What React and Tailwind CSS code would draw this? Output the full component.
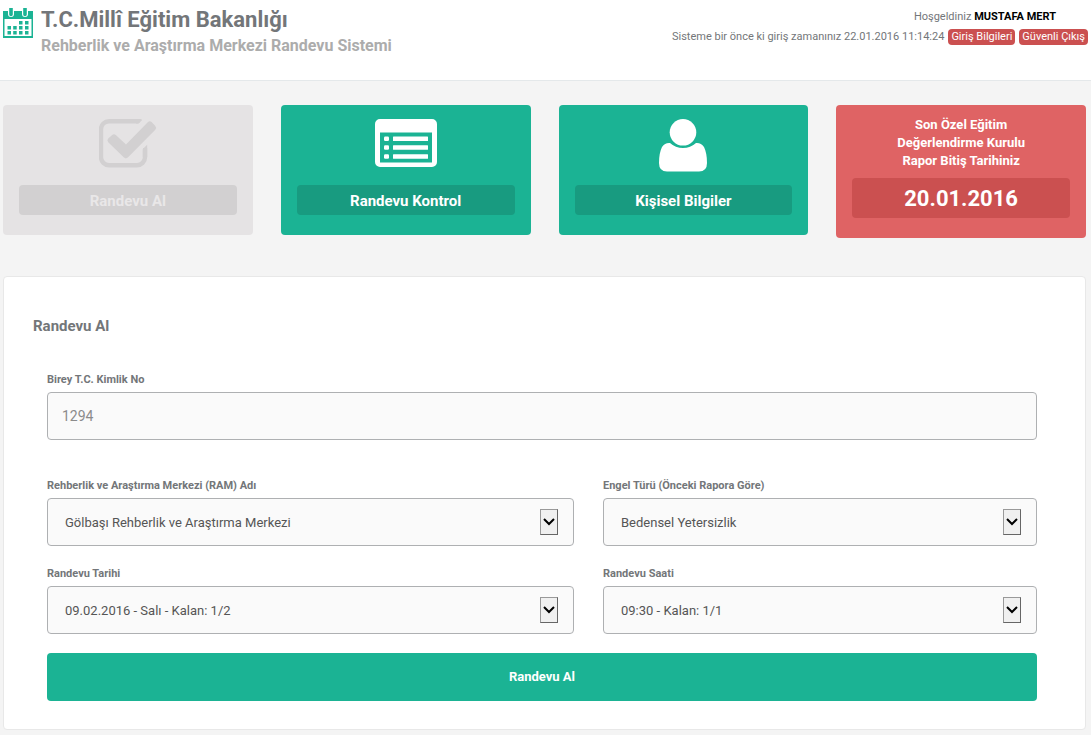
import React, { useState } from "react";

const CalendarIcon = () => (
  <svg viewBox="0 0 30 30" className="w-[30px] h-[30px] shrink-0" aria-hidden="true">
    <path
      fill="#1bb394"
      fillRule="evenodd"
      d="M0 3h30v27H0zM1.500 11v17h27V11z"
    />
    <path
      d="M8 0v6M22 0v6"
      stroke="#fff"
      strokeWidth="6"
      strokeLinecap="round"
    />
    <path
      d="M8 0v6.500M22 0v6.500"
      stroke="#1bb394"
      strokeWidth="3.600"
      strokeLinecap="round"
    />
    <path
      fill="#1bb394"
      d="M16 13h3.500v3.500H16zM22 13h3.500v3.500H22zM4.500 18H8v3.500H4.500zM10.200 18h3.500v3.500h-3.500zM16 18h3.500v3.500H16zM22 18h3.500v3.500H22zM4.500 23H8v3.500H4.500zM10.200 23h3.500v3.500h-3.500zM16 23h3.500v3.500H16zM22 23h3.500v3.500H22z"
    />
  </svg>
);

const CheckIcon = () => (
  <svg viewBox="0 0 58 54" className="w-[58px] h-[54px]" fill="none" aria-hidden="true">
    <path
      d="M41 2.200H10a8 8 0 0 0-8 8v28a8 8 0 0 0 8 8h28a8 8 0 0 0 8-8V29"
      stroke="#d2d0d1"
      strokeWidth="4.400"
    />
    <path d="M36 8L43.500 0.500L50 8L46 24L43 32L38 30z" fill="#e5e3e4" />
    <path d="M43.800 30l4.400-4.200V38h-4.400z" fill="#d2d0d1" />
    <path d="M37 0h4q2 0 2 1.300L39.500 4.400H37z" fill="#d2d0d1" />
    <path
      d="M9.200 19.500l4-3.600q1.800-1.300 3.600 0L27 25.500L49 3q1.800-1.600 3.600 0l3.700 4q1.600 2 0 3.800L28.800 38.600q-2 1.600-3.800 0L9.200 23.200q-1.600-1.800 0-3.700z"
      fill="#d2d0d1"
    />
  </svg>
);

const ListIcon = () => (
  <svg viewBox="0 0 62 54" className="w-[62px] h-[54px]" aria-hidden="true">
    <path
      fill="#fff"
      fillRule="evenodd"
      d="M5 0h52a5 5 0 0 1 5 5v38a5 5 0 0 1-5 5H5a5 5 0 0 1-5-5V5a5 5 0 0 1 5-5zM5 13.500v30h52v-30z"
    />
    <g fill="#fff">
      <rect x="9" y="17.500" width="5" height="4.500" rx="1.200" />
      <rect x="9" y="26.300" width="5" height="4.500" rx="1.200" />
      <rect x="9" y="35.200" width="5" height="4.500" rx="1.200" />
      <rect x="18" y="17.500" width="35" height="4.500" rx="0.500" />
      <rect x="18" y="26.300" width="35" height="4.500" rx="0.500" />
      <rect x="18" y="35.200" width="35" height="4.500" rx="0.500" />
    </g>
  </svg>
);

const UserIcon = () => (
  <svg viewBox="0 0 50 54" className="w-[50px] h-[54px]" fill="#fff" aria-hidden="true">
    <circle cx="25" cy="13.300" r="13.300" />
    <path d="M12 24Q17.500 29 25 29Q32.500 29 38 24Q43 23.500 46 28Q49 34 49 44Q49 52.500 41 52.500H9Q1 52.500 1 44Q1 34 4 28Q7 23.500 12 24z" />
  </svg>
);

const MenuCard = ({ icon, title, disabled }) => (
  <button
    type="button"
    disabled={disabled}
    className={`flex flex-col items-center h-[130px] rounded px-4 pt-3.5 ${
      disabled ? "bg-[#e5e3e4]" : "bg-[#1bb394] cursor-pointer"
    }`}
  >
    {icon}
    <span
      className={`w-full h-[30px] mt-3 rounded text-[15px] leading-8 font-bold ${
        disabled ? "bg-[#d2d0d1] text-[#e9e7e8]" : "bg-[#189b80] text-white"
      }`}
    >
      {title}
    </span>
  </button>
);

const SelectField = ({ id, label, options }) => {
  const [value, setValue] = useState(options[0]);

  return (
    <div>
      <label htmlFor={id} className="block text-[11px] leading-4 font-bold mb-1">
        {label}
      </label>
      <div className="relative">
        <select
          id={id}
          value={value}
          onChange={(e) => setValue(e.target.value)}
          className="block w-full h-12 appearance-none rounded border border-[#aeb0b2] bg-[#fafafa] pl-[17px] pr-10 pt-0.5 text-[13px] text-[#555]"
        >
          {options.map((option) => (
            <option key={option}>{option}</option>
          ))}
        </select>
        <span className="absolute right-4 top-[11px] flex justify-center w-[18px] h-[26px] pt-2 bg-[#f0f0f0] border border-[#999] border-r-[#666] border-b-[#666] pointer-events-none">
          <svg viewBox="0 0 12 8" className="w-3 h-2" fill="none" aria-hidden="true">
            <path d="M1 1l5 5l5-5" stroke="#000" strokeWidth="2" />
          </svg>
        </span>
      </div>
    </div>
  );
};

export default function App() {
  const [kimlikNo, setKimlikNo] = useState("1294");

  return (
    <div className="min-h-screen bg-[#f4f4f4] pb-[5px] text-[#737679] font-[Roboto,'Open_Sans',sans-serif]">
      <header className="flex justify-between h-[81px] bg-white border-b border-[#e4e8ea] px-[3px]">
        <div className="flex gap-2 pt-2">
          <CalendarIcon />
          <div className="font-bold">
            <h1 className="text-[22px] leading-6">T.C.Millî Eğitim Bakanlığı</h1>
            <p className="text-[16px] leading-7 text-[#acacac]">
              Rehberlik ve Araştırma Merkezi Randevu Sistemi
            </p>
          </div>
        </div>

        <div className="pt-[7px] text-[11px] text-right">
          <p className="leading-5 pr-8">
            Hoşgeldiniz <strong className="text-black">MUSTAFA MERT</strong>
          </p>
          <div className="flex items-center justify-end gap-1 h-5">
            <span>Sisteme bir önce ki giriş zamanınız 22.01.2016 11:14:24</span>
            <a href="#giris" className="rounded bg-[#cb5050] px-[3px] leading-4 text-white">
              Giriş Bilgileri
            </a>
            <a href="#cikis" className="rounded bg-[#cb5050] px-[3px] leading-4 text-white">
              Güvenli Çıkış
            </a>
          </div>
        </div>
      </header>

      <main className="pl-[3px] pr-[5px] pt-6">
        <div className="grid grid-cols-4 items-start gap-7">
          <MenuCard icon={<CheckIcon />} title="Randevu Al" disabled />
          <MenuCard icon={<ListIcon />} title="Randevu Kontrol" />
          <MenuCard icon={<UserIcon />} title="Kişisel Bilgiler" />
          <div className="h-[133px] rounded bg-[#df6364] px-4 pt-[11px] text-center font-bold text-white">
            <p className="text-[13px] leading-[18px]">
              Son Özel Eğitim
              <br />
              Değerlendirme Kurulu
              <br />
              Rapor Bitiş Tarihiniz
            </p>
            <p className="h-10 mt-2 rounded bg-[#cb5050] text-[22px] leading-[42px]">20.01.2016</p>
          </div>
        </div>

        <section className="mt-[38px] rounded border border-[#e8e8e8] bg-white pl-[29px] pr-[34px] pt-[37px] pb-7">
          <h2 className="text-[15px] leading-6 font-bold">Randevu Al</h2>

          <form onSubmit={(e) => e.preventDefault()} className="px-3.5 pt-[34px]">
            <label htmlFor="kimlik" className="block text-[11px] leading-4 font-bold mb-1">
              Birey T.C. Kimlik No
            </label>
            <input
              id="kimlik"
              type="text"
              value={kimlikNo}
              onChange={(e) => setKimlikNo(e.target.value)}
              className="block w-full h-12 rounded border border-[#aeb0b2] bg-[#fafafa] px-3.5 text-[14px] text-[#8b8b8b]"
            />

            <div className="grid grid-cols-[17fr_14fr] gap-x-[29px] gap-y-5 mt-[38px]">
              <SelectField
                id="ram"
                label="Rehberlik ve Araştırma Merkezi (RAM) Adı"
                options={["Gölbaşı Rehberlik ve Araştırma Merkezi"]}
              />
              <SelectField
                id="engel"
                label="Engel Türü (Önceki Rapora Göre)"
                options={["Bedensel Yetersizlik"]}
              />
              <SelectField
                id="tarih"
                label="Randevu Tarihi"
                options={["09.02.2016 - Salı - Kalan: 1/2"]}
              />
              <SelectField id="saat" label="Randevu Saati" options={["09:30 - Kalan: 1/1"]} />
            </div>

            <button
              type="submit"
              className="w-full h-12 mt-[19px] rounded bg-[#1bb394] text-[13px] font-bold text-white cursor-pointer"
            >
              Randevu Al
            </button>
          </form>
        </section>
      </main>
    </div>
  );
}
